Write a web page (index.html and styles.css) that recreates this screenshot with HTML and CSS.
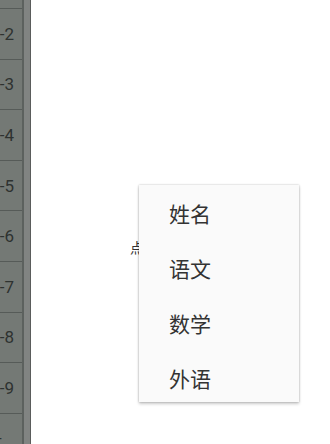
FILE: index.html
```html
<!DOCTYPE html>
<html>
<head>
<meta charset="utf-8">
<link rel="stylesheet" href="styles.css">
</head>
<body>
<div class="page">
  <div class="rows">
    <div class="row first"><span>1-1</span></div>
    <div class="row"><span>1-2</span></div>
    <div class="row"><span>1-3</span></div>
    <div class="row"><span>1-4</span></div>
    <div class="row"><span>1-5</span></div>
    <div class="row"><span>1-6</span></div>
    <div class="row"><span>1-7</span></div>
    <div class="row"><span>1-8</span></div>
    <div class="row"><span>1-9</span></div>
    <div class="row cut"><span>-</span></div>
  </div>
  <div class="strip"></div>
  <div class="main">
    <p class="hint">点击表头弹出菜单</p>
    <div class="menu">
      <div class="item">姓名</div>
      <div class="item">语文</div>
      <div class="item">数学</div>
      <div class="item">外语</div>
    </div>
  </div>
</div>
</body>
</html>
```
FILE: styles.css
```css
html, body {
  margin: 0;
  padding: 0;
  background: #ffffff;
}
body {
  width: 330px;
  height: 444px;
  overflow: hidden;
  font-family: Roboto, "Noto Sans CJK SC", sans-serif;
}
.page {
  display: flex;
  height: 444px;
  overflow: hidden;
}
.rows {
  width: 22px;
  flex: none;
  background: #747975;
  border-right: 2px solid #5c615e;
  overflow: hidden;
}
.row {
  box-sizing: border-box;
  height: 50.6px;
  border-bottom: 1px solid #565b58;
  display: flex;
  align-items: center;
  justify-content: flex-end;
  padding-right: 8px;
  overflow: hidden;
  color: #2e3230;
  font-size: 17px;
  white-space: nowrap;
}
.row.first {
  margin-top: -41.6px;
}
.row.cut {
  justify-content: flex-start;
  padding-right: 0;
  margin-left: -3px;
  padding-bottom: 2px;
  border-bottom: none;
}
.strip {
  width: 6px;
  flex: none;
  background: #818482;
  border-right: 1px solid #5a5c5b;
}
.main {
  flex: 1;
  position: relative;
}
.hint {
  margin: 0;
  padding: 237px 0 0 99px;
  font-family: "Noto Sans CJK SC", sans-serif;
  font-size: 14px;
  line-height: 20px;
  color: #333333;
  white-space: nowrap;
}
.menu {
  position: absolute;
  left: 108px;
  top: 185px;
  width: 160px;
  height: 217px;
  overflow: hidden;
  background: #fafafa;
  box-shadow: 0 0 2px rgba(0, 0, 0, 0.25), 0 2px 3px rgba(0, 0, 0, 0.2);
}
.item {
  height: 55px;
  display: flex;
  align-items: center;
  padding-left: 30px;
  font-family: "Noto Sans CJK SC", sans-serif;
  font-size: 21px;
  color: #333333;
}
```
